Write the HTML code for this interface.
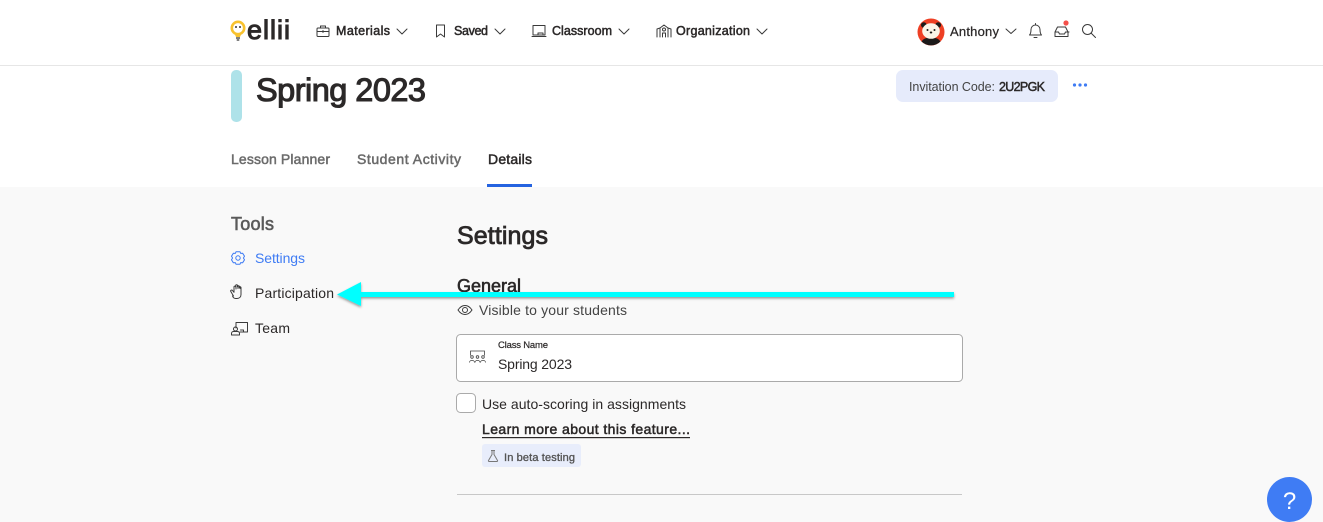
<!DOCTYPE html>
<html lang="en"><head><meta charset="utf-8"><title>Ellii - Spring 2023</title>
<style>
html,body{margin:0;padding:0;width:1323px;height:522px;overflow:hidden;background:#f9f9f9}
svg{display:block}
text{font-family:"Liberation Sans","Noto Sans CJK JP",sans-serif;fill:#2b2828}
.sb{stroke:#2b2828;stroke-width:.5}
.ic{fill:none;stroke:#3a3a3a;stroke-width:1;stroke-linecap:round;stroke-linejoin:round}
.g{fill:#6b6b6b;stroke:#6b6b6b;stroke-width:.5}
</style></head><body>
<svg width="1323" height="522" viewBox="0 0 1323 522" xmlns="http://www.w3.org/2000/svg">
<defs><filter id="s" x="-5%" y="-50%" width="110%" height="200%"><feDropShadow dx="0" dy="1.5" stdDeviation="1.2" flood-color="#000" flood-opacity=".4"/></filter></defs>
<rect width="1323" height="522" fill="#f9f9f9"/>
<rect width="1323" height="187" fill="#fff"/>
<rect y="65" width="1323" height="1" fill="#e6e6e6"/>
<!-- logo -->
<circle cx="238" cy="28" r="6.200" fill="#fff" stroke="#f8c22e" stroke-width="2.600"/>
<path d="M234.500 33.500h7l-1.500 3.500h-4z" fill="#f8c22e"/>
<path d="M236 38h4M236.700 40h2.600" stroke="#333" stroke-width="1.200"/>
<circle cx="236" cy="27" r="1" fill="#333"/><circle cx="240" cy="27" r="1" fill="#333"/>
<text x="247" y="39" font-size="27" textLength="43" style="stroke:#2b2828;stroke-width:1">ellii</text>
<!-- nav -->
<g class="ic">
<rect x="317" y="28" width="12" height="8.500" rx="1"/><path d="M320.500 28v-2h5v2M317 31.500h12M323 30.500v2"/>
<path d="M397 29l5 5 5-5M495 29l5 5 5-5M619 29l5 5 5-5M757 29l5 5 5-5"/>
<path d="M436.500 25h8v12l-4-3-4 3z"/>
<path d="M533 25.500h12v9.500h-12zM532 36.500h14M538 35v-2h5v2"/>
<path d="M657 37v-8M660 37v-9l4-3 4 3v9M671 37v-8M657 29l3-1M668 28l3 1M662.500 37v-4h3v4"/><circle cx="664" cy="29.500" r="1.500"/>
<path d="M1006 29l5 4.500 5-4.500"/>
<path d="M1029.500 35c1.500-1.500 1.500-3.500 1.500-5.500a4.500 4.500 0 0 1 9 0c0 2 0 4 1.500 5.500zM1034 37.500h3M1035.500 23.500v1.500"/>
<path d="M1055 32l2.500-5h8l2.500 5v4.500h-13zM1055 32h3.500l1 2h5l1-2h3.500"/>
<circle cx="1087.500" cy="29.500" r="5"/><path d="M1091 33l4.500 4.500"/>
</g>
<circle cx="1066" cy="23" r="2.600" fill="#f4504a"/>
<text class="sb" x="336" y="35" font-size="12.500" textLength="54">Materials</text>
<text class="sb" x="454" y="35" font-size="12.500" textLength="34">Saved</text>
<text class="sb" x="552" y="35" font-size="12.500" textLength="60">Classroom</text>
<text class="sb" x="676" y="35" font-size="12.500" textLength="74">Organization</text>
<!-- avatar -->
<circle cx="931" cy="32" r="13.500" fill="#ee3f24"/>
<path d="M921.500 41.500c2-3 5-4 9.500-4s7.500 1 9.500 4a13.500 13.500 0 0 1-19 0z" fill="#1c1a1a"/>
<circle cx="923.800" cy="25" r="2.800" fill="#1c1a1a"/><circle cx="938.200" cy="25" r="2.800" fill="#1c1a1a"/>
<ellipse cx="931" cy="31" rx="8.800" ry="7.800" fill="#fbf4e8"/>
<circle cx="927.500" cy="30" r="1" fill="#1c1a1a"/><circle cx="934.500" cy="30" r="1" fill="#1c1a1a"/><ellipse cx="931" cy="32.500" rx="1.300" ry="1" fill="#1c1a1a"/>
<text x="950" y="36" font-size="13" textLength="49" style="stroke:#2b2828;stroke-width:.25">Anthony</text>
<!-- title -->
<rect x="231" y="70" width="11" height="52" rx="5" fill="#aee2e9"/>
<text x="256" y="101" font-size="32.500" textLength="170" style="stroke:#2b2828;stroke-width:1.100">Spring 2023</text>
<rect x="896" y="70" width="162" height="32" rx="7" fill="#e6ebfb"/>
<text x="909" y="91" font-size="12.500" textLength="86" style="fill:#444">Invitation Code:</text>
<text class="sb" x="999" y="91" font-size="12.500" textLength="46">2U2PGK</text>
<g fill="#3f7cf4"><circle cx="1074.500" cy="85" r="1.600"/><circle cx="1080" cy="85" r="1.600"/><circle cx="1085.500" cy="85" r="1.600"/></g>
<!-- tabs -->
<text class="g" x="231" y="164" font-size="14" textLength="99">Lesson Planner</text>
<text class="g" x="357" y="164" font-size="14" textLength="104">Student Activity</text>
<text class="sb" x="488" y="164" font-size="14" textLength="44">Details</text>
<rect x="487" y="184" width="45" height="3" fill="#2563e0"/>
<!-- sidebar -->
<text x="231" y="230" font-size="18" textLength="43" style="fill:#5a5a5a;stroke:#5a5a5a;stroke-width:.6">Tools</text>
<circle cx="238" cy="258" r="2.200" fill="none" stroke="#3f7cf4"/>
<path d="M236 251.800h4l.7 1.600 1.900-.2 1.900 3-1.100 1.800 1.100 1.800-1.900 3-1.900-.2-.7 1.600h-4l-.7-1.600-1.900.2-1.900-3 1.100-1.800-1.100-1.800 1.900-3 1.900.2z" fill="none" stroke="#3f7cf4" stroke-linejoin="round"/>
<text x="255" y="263" font-size="14" textLength="50" style="fill:#3f7cf4">Settings</text>
<path class="ic" d="M233.500 296l-2.700-4.500c-.6-1.100.9-2 1.700-1l1.500 1.800v-5.300c0-1.200 1.700-1.200 1.700 0v-1.300c0-1.200 1.800-1.200 1.800 0v1c0-1.200 1.800-1.200 1.800 0v1c0-1.100 1.700-1.100 1.700 0v6.800c0 2.500-1.700 4-4 4h-1.300c-1.500 0-2.600-.9-3.200-2.500zM236 289v-2.800M238 288.500v-2.800M240 288.500v-2"/>
<text x="255" y="298" font-size="14" textLength="79">Participation</text>
<g class="ic"><path d="M236 328v-5.500h11.500v9.500h-4.500M240 332h3.500v-2h-3"/><circle cx="235.500" cy="329" r="2"/><path d="M231.500 335v-1.500c0-1.200 1-2 2-2h4c1 0 2 .8 2 2v1.500z"/></g>
<text x="255" y="333" font-size="14" textLength="35">Team</text>
<!-- main -->
<text x="457" y="244" font-size="25" textLength="91" style="stroke:#2b2828;stroke-width:.8">Settings</text>
<text x="457" y="292" font-size="18" textLength="64" style="stroke:#2b2828;stroke-width:.6">General</text>
<g class="ic"><path d="M458 310c2-3 4.500-4.500 7-4.500s5 1.500 7 4.500c-2 3-4.500 4.500-7 4.500s-5-1.500-7-4.500z"/><circle cx="465" cy="310" r="2.500"/></g>
<text x="479" y="315" font-size="14" textLength="148" style="fill:#444">Visible to your students</text>
<rect x="456.500" y="334.500" width="506" height="47" rx="4" fill="#fff" stroke="#aaa"/>
<g fill="none" stroke="#444" stroke-width=".8"><path d="M470.500 355.500v-4.500h14v4.500"/><circle cx="472" cy="357" r="1.300"/><circle cx="477.500" cy="357" r="1.300"/><circle cx="483" cy="357" r="1.300"/><path d="M469.500 362.500c0-2.800 5-2.800 5 0M475 362.500c0-2.800 5-2.800 5 0M480.500 362.500c0-2.800 5-2.800 5 0"/></g>
<text x="498" y="348" font-size="9.500" textLength="50" style="stroke:#2b2828;stroke-width:.2">Class Name</text>
<text x="498" y="369" font-size="14" textLength="74">Spring 2023</text>
<rect x="456.500" y="393.500" width="19" height="19" rx="4" fill="#fff" stroke="#aaa"/>
<text x="482" y="409" font-size="14" textLength="204">Use auto-scoring in assignments</text>
<text class="sb" x="482" y="434" font-size="14" textLength="208">Learn more about this feature...</text>
<rect x="482" y="437" width="208" height="1.200" fill="#2b2828"/>
<rect x="482" y="444" width="99" height="23" rx="3" fill="#e8edfb"/>
<path d="M491 450.500h4M492 450.500v4l-3.500 6c-.3.500 0 1 .5 1h8c.5 0 .8-.5.5-1l-3.500-6v-4" fill="none" stroke="#777"/>
<text x="504" y="461" font-size="11" textLength="71" style="fill:#555;stroke:#555;stroke-width:.35">In beta testing</text>
<rect x="457" y="494" width="505" height="1" fill="#c8c8c8"/>
<!-- arrow -->
<path d="M954 292v5H361v9l-24-11.500 24-12.500v10z" fill="#00ffff" filter="url(#s)"/>
<!-- help -->
<circle cx="1289.500" cy="499.500" r="22.500" fill="#3f7cf4"/>
<text x="1289.500" y="509" font-size="24" text-anchor="middle" style="fill:#fff">?</text>
</svg>
</body></html>
